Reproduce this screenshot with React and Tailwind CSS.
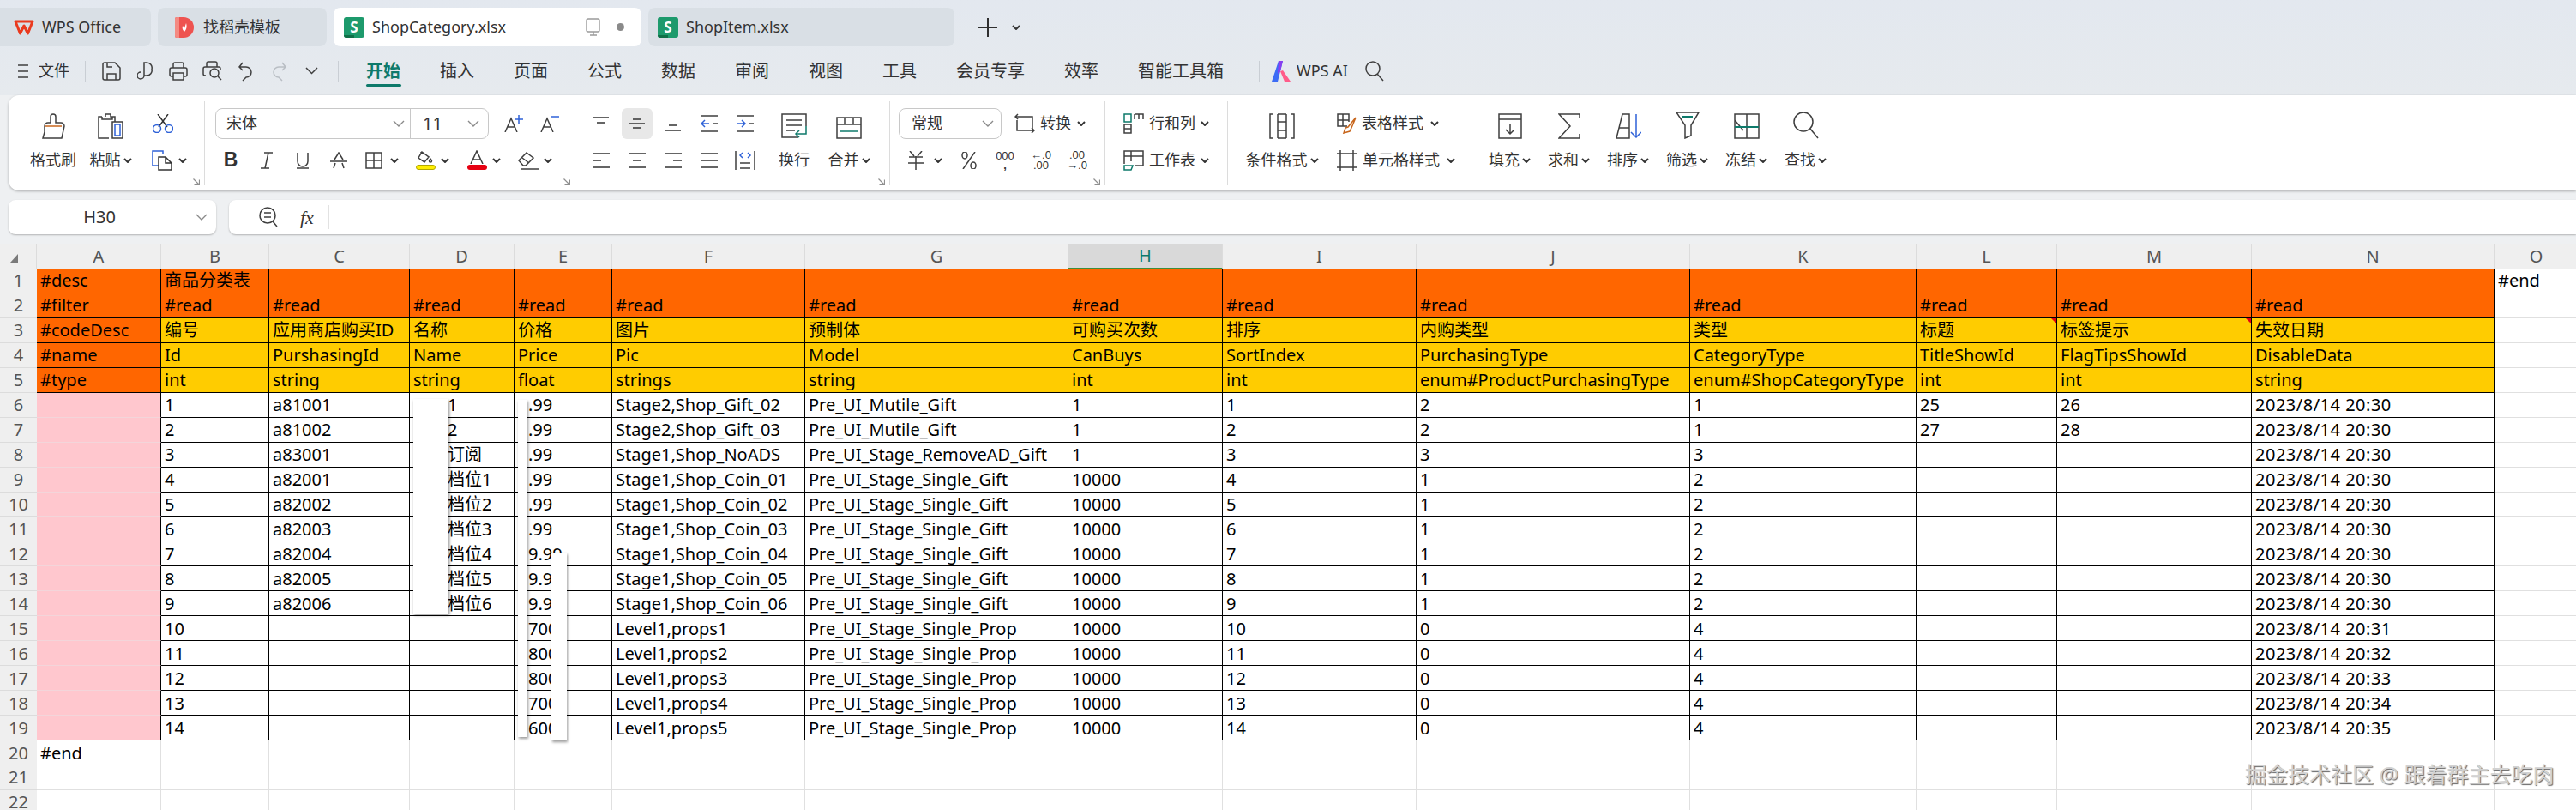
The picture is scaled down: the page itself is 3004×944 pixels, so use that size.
import { Fragment } from "react";

const FONT = "font-['Noto_Sans','Noto_Sans_CJK_SC',sans-serif]";

// 列宽和行数据
const columns = [
  ["A", 145], ["B", 126], ["C", 164], ["D", 122], ["E", 114], ["F", 225], ["G", 307],
  ["H", 180], ["I", 226], ["J", 319], ["K", 264], ["L", 164], ["M", 227], ["N", 283], ["O", 98],
];

const date = (m) => `2023/8/14 20:${m}`;
const gift = "Pre_UI_Stage_Single_Gift";
const prop = "Pre_UI_Stage_Single_Prop";

const headRows = [
  ["#desc", "商品分类表", "", "", "", "", "", "", "", "", "", "", "", ""],
  ["#filter", ...Array(13).fill("#read")],
  ["#codeDesc", "编号", "应用商店购买ID", "名称", "价格", "图片", "预制体", "可购买次数", "排序", "内购类型", "类型", "标题", "标签提示", "失效日期"],
  ["#name", "Id", "PurshasingId", "Name", "Price", "Pic", "Model", "CanBuys", "SortIndex", "PurchasingType", "CategoryType", "TitleShowId", "FlagTipsShowId", "DisableData"],
  ["#type", "int", "string", "string", "float", "strings", "string", "int", "int", "enum#ProductPurchasingType", "enum#ShopCategoryType", "int", "int", "string"],
];

const dataRows = [
  ["", "1", "a81001", "1", ".99", "Stage2,Shop_Gift_02", "Pre_UI_Mutile_Gift", "1", "1", "2", "1", "25", "26", date(30)],
  ["", "2", "a81002", "2", ".99", "Stage2,Shop_Gift_03", "Pre_UI_Mutile_Gift", "1", "2", "2", "1", "27", "28", date(30)],
  ["", "3", "a83001", "订阅", ".99", "Stage1,Shop_NoADS", "Pre_UI_Stage_RemoveAD_Gift", "1", "3", "3", "3", "", "", date(30)],
  ["", "4", "a82001", "档位1", ".99", "Stage1,Shop_Coin_01", gift, "10000", "4", "1", "2", "", "", date(30)],
  ["", "5", "a82002", "档位2", ".99", "Stage1,Shop_Coin_02", gift, "10000", "5", "1", "2", "", "", date(30)],
  ["", "6", "a82003", "档位3", ".99", "Stage1,Shop_Coin_03", gift, "10000", "6", "1", "2", "", "", date(30)],
  ["", "7", "a82004", "档位4", "9.99", "Stage1,Shop_Coin_04", gift, "10000", "7", "1", "2", "", "", date(30)],
  ["", "8", "a82005", "档位5", "9.99", "Stage1,Shop_Coin_05", gift, "10000", "8", "1", "2", "", "", date(30)],
  ["", "9", "a82006", "档位6", "9.99", "Stage1,Shop_Coin_06", gift, "10000", "9", "1", "2", "", "", date(30)],
  ["", "10", "", "", "700", "Level1,props1", prop, "10000", "10", "0", "4", "", "", date(31)],
  ["", "11", "", "", "800", "Level1,props2", prop, "10000", "11", "0", "4", "", "", date(32)],
  ["", "12", "", "", "800", "Level1,props3", prop, "10000", "12", "0", "4", "", "", date(33)],
  ["", "13", "", "", "700", "Level1,props4", prop, "10000", "13", "0", "4", "", "", date(34)],
  ["", "14", "", "", "600", "Level1,props5", prop, "10000", "14", "0", "4", "", "", date(35)],
];

const Svg = ({ w, h, children, sw = 1.5, stroke = "#3f3f3f" }) => (
  <svg width={w} height={h} viewBox={`0 0 ${w} ${h}`} fill="none" stroke={stroke} strokeWidth={sw} className="shrink-0">
    {children}
  </svg>
);

const Chev = () => (
  <svg width="10" height="6" viewBox="0 0 10 6" fill="none" stroke="#333" strokeWidth="2" className="shrink-0">
    <path d="M1 1l4 4 4-4" />
  </svg>
);

const ThinChev = () => (
  <svg width="14" height="8" viewBox="0 0 14 8" fill="none" stroke="#8a8a8a" strokeWidth="1.4" className="shrink-0">
    <path d="M1 1l6 6 6-6" />
  </svg>
);

const Launcher = () => (
  <svg width="8" height="8" viewBox="0 0 8 8" fill="none" stroke="#8f8f8f" strokeWidth="1.2" className="absolute right-[5px] bottom-[0px]">
    <path d="M0.5 0.5l7 7M7.5 1.5v6h-6" />
  </svg>
);

const SheetIcon = () => (
  <div className="relative flex h-6 w-6 shrink-0 items-center justify-center overflow-hidden rounded-[3px] bg-[#1d9a6c] text-[17px] font-bold leading-none text-white">
    S
    <div className="absolute bottom-0 left-0 h-[3px] w-3 bg-[#107048]" />
  </div>
);

// 大按钮：上面图标，下面文字
const Big = ({ icon, label, chev, w }) => (
  <div className="flex shrink-0 flex-col items-center" style={{ width: w }}>
    <div className="flex h-9 items-end">{icon}</div>
    <div className="mt-[7px] flex h-9 items-center gap-[3px] whitespace-nowrap">
      {label}
      {chev && <Chev />}
    </div>
  </div>
);

const Slot = ({ w, children, gap = "gap-[9px]" }) => (
  <div className={`flex h-9 shrink-0 items-center justify-center ${gap}`} style={{ width: w }}>
    {children}
  </div>
);

const Group = ({ w, children, launcher, border = true }) => (
  <div
    className={`relative flex h-[98px] shrink-0 flex-col pt-2 ${border ? "border-r border-[#dcdcdc]" : ""}`}
    style={{ width: w }}
  >
    {children}
    {launcher && <Launcher />}
  </div>
);

const AlignLines = ({ lines }) => (
  <Svg w={22} h={20} sw={1.6}>
    {lines.map(([x1, x2, y]) => (
      <path key={`${x1}-${y}`} d={`M${x1} ${y}H${x2}`} />
    ))}
  </Svg>
);

const Tabs = () => (
  <div className="flex h-[54px] items-end gap-[8px] text-[18px] text-[#333]">
    <div className="flex h-[45px] w-[176px] items-center rounded-r-lg bg-[#d9dfe5] pl-4">
      <svg width="24" height="18" viewBox="0 0 24 18" fill="none" strokeWidth="3" strokeLinejoin="round" className="shrink-0">
        <path d="M2 2h20l-5.500 14-4.500-9-4.500 9z" stroke="#ea3a1e" />
      </svg>
      <span className="ml-[9px]">WPS Office</span>
    </div>
    <div className="flex h-[45px] w-[197px] items-center rounded-lg bg-[#d9dfe5] pl-5">
      <svg width="22" height="24" viewBox="0 0 22 24" className="shrink-0">
        <path d="M0 2a2 2 0 012-2h8a12 12 0 010 24H2a2 2 0 01-2-2z" fill="#ee5350" />
        <path d="M0 2a2 2 0 012-2h3v24H2a2 2 0 01-2-2z" fill="#f48a82" />
        <path d="M11 17c-2-2-3-4-2-7l2 3 2-6c1 3 1 7-2 10z" fill="#fff" />
      </svg>
      <span className="ml-[11px]">找稻壳模板</span>
    </div>
    <div className="flex h-[45px] w-[359px] items-center rounded-lg bg-white pl-3 pr-5">
      <SheetIcon />
      <span className="ml-[9px]">ShopCategory.xlsx</span>
      <svg width="20" height="24" viewBox="0 0 20 24" fill="none" stroke="#9a9a9a" strokeWidth="1.4" className="ml-auto shrink-0">
        <rect x="2" y="2" width="15" height="15" rx="2" />
        <path d="M6 21h8M10 17v4" />
      </svg>
      <div className="ml-[17px] h-[9px] w-[9px] rounded-full bg-[#8a8a8a]" />
    </div>
    <div className="flex h-[45px] w-[357px] items-center rounded-lg bg-[#d9dfe5] pl-[11px]">
      <SheetIcon />
      <span className="ml-[9px]">ShopItem.xlsx</span>
    </div>
    <div className="ml-[20px] flex h-[45px] items-center gap-[17px]">
      <Svg w={22} h={22} sw={2} stroke="#2f2f2f">
        <path d="M11 0v22M0 11h22" />
      </Svg>
      <Chev />
    </div>
  </div>
);

const MenuBar = () => {
  const menus = ["插入", "页面", "公式", "数据", "审阅", "视图", "工具", "会员专享", "效率", "智能工具箱"];
  return (
    <div className="flex h-[57px] items-center text-[#333]">
      <Svg w={12} h={16} sw={1.5}>
        <path d="M0 1h12M0 8h12M0 15h12" />
      </Svg>
      <span className="ml-3 text-[18px]">文件</span>
      <div className="ml-[18px] h-6 w-px bg-[#c9ced4]" />
      <div className="ml-[19px]">
        <Svg w={22} h={22}>
          <path d="M3 1h12l6 6v12a2 2 0 01-2 2H3a2 2 0 01-2-2V3a2 2 0 012-2zM6 21v-7h10v7M6 2v4h6" />
        </Svg>
      </div>
      <div className="ml-[19px]">
        <Svg w={18} h={22}>
          <path d="M8 16H11a6 6 0 006-7.500A6 6 0 0011 1H8v15a4 4 0 11-4-4" />
        </Svg>
      </div>
      <div className="ml-[19px]">
        <Svg w={22} h={22}>
          <path d="M5 7V3a2 2 0 012-2h8a2 2 0 012 2v4M5 17H3a2 2 0 01-2-2V9a2 2 0 012-2h16a2 2 0 012 2v6a2 2 0 01-2 2h-2M5 13h12v8H5z" />
        </Svg>
      </div>
      <div className="ml-[17px]">
        <Svg w={23} h={23}>
          <path d="M5 7V3a2 2 0 012-2h8a2 2 0 012 2v4M4 17H3a2 2 0 01-2-2V9a2 2 0 012-2h16a2 2 0 012 2v1" />
          <circle cx="14" cy="14" r="5" />
          <path d="M18 18l4 4" />
        </Svg>
      </div>
      <div className="ml-[19px]">
        <Svg w={16} h={24}>
          <path d="M1 7h8a6 6 0 010 12l-4 4M5 2L1 7l4 4" />
        </Svg>
      </div>
      <div className="ml-[24px]">
        <Svg w={16} h={24} stroke="#b9bec4">
          <path d="M15 7H7a6 6 0 000 12l4 4M11 2l4 5-4 4" />
        </Svg>
      </div>
      <div className="ml-[22px]">
        <Svg w={15} h={9}>
          <path d="M1 1l6.500 6.500L14 1" />
        </Svg>
      </div>
      <div className="ml-[23px] h-6 w-px bg-[#c9ced4]" />
      <div className="relative ml-[32px] text-[20px] font-bold text-[#0e7a6b]">
        开始
        <div className="absolute -bottom-[3px] left-0 h-[3px] w-[41px] rounded-full bg-[#0e7a6b]" />
      </div>
      <div className="ml-[46px] flex gap-[46px] whitespace-nowrap text-[20px]">
        {menus.map((m) => (
          <span key={m}>{m}</span>
        ))}
      </div>
      <div className="ml-[41px] h-6 w-px bg-[#c9ced4]" />
      <svg width="22" height="24" viewBox="0 0 22 24" className="ml-[14px] shrink-0">
        <path d="M8 0h5L7 24H0z" fill="#3c6cf5" />
        <path d="M8 0h5l-3 12-3 3z" fill="#8a3ff0" />
        <path d="M10 12l3-1 9 13h-7z" fill="#ff5c8a" />
      </svg>
      <span className="ml-[7px] text-[18px]">WPS AI</span>
      <div className="ml-[20px]">
        <Svg w={23} h={24}>
          <circle cx="9" cy="9" r="8" />
          <path d="M14 15l7 8" />
        </Svg>
      </div>
    </div>
  );
};

const Ribbon = () => (
  <div className="ml-[10px] flex h-[111px] items-center rounded-l-xl bg-white pl-0 text-[18px] text-[#333] shadow-[0_1px_3px_rgba(0,0,0,0.28)]">
    <Group w={229} launcher>
      <div className="flex pl-[16px]">
        <Big
          w={72}
          label="格式刷"
          icon={
            <Svg w={28} h={30}>
              <path d="M11 11V4a3 3 0 016 0v7h6a4 4 0 014 4l-3 14H2l2-7V15a4 4 0 014-4z" />
              <path d="M5 15h19" stroke="#c8661c" />
            </Svg>
          }
        />
        <Big
          w={62}
          label="粘贴"
          chev
          icon={
            <Svg w={30} h={30}>
              <path d="M5 4H1v25h12M9 4V1h6v3h5v6M5 4v3h12V4" />
              <path d="M17 10h12v19H17z" />
              <path d="M20 13h6v13h-6z" stroke="#2f62d8" />
            </Svg>
          }
        />
        <div className="flex flex-col">
          <div className="flex h-9 w-[65px] items-center justify-center pr-[5px]">
            <Svg w={24} h={22} stroke="#333">
              <path d="M6 0l11 15M18 0L7 15" />
              <circle cx="5" cy="17" r="4.500" stroke="#2f62d8" />
              <circle cx="19" cy="17" r="4.500" stroke="#2f62d8" />
            </Svg>
          </div>
          <div className="mt-[7px] flex h-9 items-center gap-[7px] pl-[17px]">
            <svg width="24" height="24" viewBox="0 0 24 24" fill="none" strokeWidth="1.5" className="shrink-0">
              <path d="M8 18H1V1h12v4" stroke="#2f62d8" />
              <path d="M8 8h8l7 7v8H8zM16 8v7h7" stroke="#333" />
            </svg>
            <Chev />
          </div>
        </div>
      </div>
    </Group>

    <Group w={432} launcher>
      <div className="flex items-center pl-[12px]">
        <div className="flex h-9 w-[319px] rounded-lg border border-[#c8c8c8]">
          <div className="flex w-[227px] items-center justify-between border-r border-[#c8c8c8] pl-3 pr-[6px]">
            <span>宋体</span>
            <ThinChev />
          </div>
          <div className="flex flex-1 items-center justify-between pl-[14px] pr-[10px]">
            <span className="text-[20px]">11</span>
            <ThinChev />
          </div>
        </div>
        <div className="ml-[18px] flex items-center gap-[20px]">
          <Svg w={22} h={20}>
            <path d="M1 20L8 4l7 16M3.500 14h9" />
            <path d="M17 0v10M12 5h10" stroke="#2f62d8" />
          </Svg>
          <Svg w={22} h={20}>
            <path d="M1 20L8 4l7 16M3.500 14h9" />
            <path d="M12 2h10" stroke="#2f62d8" />
          </Svg>
        </div>
      </div>
      <div className="mt-[7px] flex items-center pl-[9px]">
        <Slot w={42}>
          <span className="font-['Liberation_Sans',sans-serif] text-[23px] font-bold leading-none">B</span>
        </Slot>
        <Slot w={42}>
          <Svg w={16} h={20}>
            <path d="M5 1h10M1 19h10M10 1L6 19" />
          </Svg>
        </Slot>
        <Slot w={42}>
          <Svg w={14} h={20}>
            <path d="M1 1v10a6 6 0 0012 0V1M0 19h14" />
          </Svg>
        </Slot>
        <Slot w={42}>
          <Svg w={20} h={20}>
            <path d="M5 9l5-8 5 8M0 11h20M4 19l2-6M16 19l-2-6" />
          </Svg>
        </Slot>
        <Slot w={58}>
          <Svg w={20} h={20}>
            <path d="M1 1h18v18H1zM10 1v18M1 10h18" />
          </Svg>
          <Chev />
        </Slot>
        <Slot w={60} gap="gap-[6px]">
          <div className="flex flex-col items-center">
            <Svg w={20} h={15}>
              <path d="M6 1l8 6-5 6-7-5zM5 3V1M16 9c2 2 2 4 0 4s-2-2 0-4z" />
            </Svg>
            <div className="mt-[1px] h-[6px] w-[23px] rounded-sm border border-[#b4a800] bg-[#ffee00]" />
          </div>
          <Chev />
        </Slot>
        <Slot w={60} gap="gap-[6px]">
          <div className="flex flex-col items-center">
            <Svg w={18} h={16}>
              <path d="M2 16L9 1l7 15M5 11h8" />
            </Svg>
            <div className="mt-[1px] h-[6px] w-[23px] rounded-sm bg-[#e60012]" />
          </div>
          <Chev />
        </Slot>
        <Slot w={60} gap="gap-[6px]">
          <Svg w={24} h={22}>
            <path d="M1 11l9-9 8 6-9 9H6zM5 8l8 6M4 21h20" />
          </Svg>
          <Chev />
        </Slot>
      </div>
    </Group>

    <Group w={367} launcher>
      <div className="flex pl-[9px]">
        <div className="w-[210px] shrink-0">
          <div className="flex">
            <Slot w={42}>
              <AlignLines lines={[[2, 20, 3], [6, 16, 9]]} />
            </Slot>
            <Slot w={42}>
              <div className="flex h-9 w-9 items-center justify-center rounded-md bg-[#e8e8e8]">
                <AlignLines lines={[[6, 16, 5], [2, 20, 10], [6, 16, 15]]} />
              </div>
            </Slot>
            <Slot w={42}>
              <AlignLines lines={[[6, 16, 12], [2, 20, 18]]} />
            </Slot>
            <Slot w={42}>
              <svg width="20" height="20" viewBox="0 0 20 20" fill="none" strokeWidth="1.5" className="shrink-0">
                <path d="M0 1h20M0 19h20M14 10h6" stroke="#3f3f3f" />
                <path d="M10 10H1M5 6l-4 4 4 4" stroke="#2f62d8" />
              </svg>
            </Slot>
            <Slot w={42}>
              <svg width="20" height="20" viewBox="0 0 20 20" fill="none" strokeWidth="1.5" className="shrink-0">
                <path d="M0 1h20M0 19h20M14 10h6" stroke="#3f3f3f" />
                <path d="M1 10h9M6 6l4 4-4 4" stroke="#2f62d8" />
              </svg>
            </Slot>
          </div>
          <div className="mt-[7px] flex">
            <Slot w={42}>
              <AlignLines lines={[[1, 21, 2], [1, 11, 10], [1, 21, 18]]} />
            </Slot>
            <Slot w={42}>
              <AlignLines lines={[[1, 21, 2], [6, 16, 10], [1, 21, 18]]} />
            </Slot>
            <Slot w={42}>
              <AlignLines lines={[[1, 21, 2], [11, 21, 10], [1, 21, 18]]} />
            </Slot>
            <Slot w={42}>
              <AlignLines lines={[[1, 21, 2], [1, 21, 10], [1, 21, 18]]} />
            </Slot>
            <Slot w={42}>
              <svg width="24" height="22" viewBox="0 0 24 22" fill="none" strokeWidth="1.5" className="shrink-0">
                <path d="M1 0v22M23 0v22M6 14h12M6 20h12" stroke="#3f3f3f" />
                <path d="M9 2L6 5l3 3M15 2l3 3-3 3" stroke="#2f62d8" />
              </svg>
            </Slot>
          </div>
        </div>
        <Big
          w={72}
          label="换行"
          icon={
            <svg width="30" height="30" viewBox="0 0 30 30" fill="none" strokeWidth="1.5" className="shrink-0">
              <path d="M20 28H1V1h28v14M6 8h18M6 14h18M6 20h10" stroke="#3f3f3f" />
              <path d="M29 15v9h-11M21 20l-4 4 4 4" stroke="#0e7a6b" />
            </svg>
          }
        />
        <Big
          w={56}
          label="合并"
          chev
          icon={
            <svg width="30" height="26" viewBox="0 0 30 26" fill="none" strokeWidth="1.5" className="shrink-0">
              <path d="M1 1h28v24H1zM1 9h28M10 1v8M20 1v8" stroke="#3f3f3f" />
              <path d="M5 17h20" stroke="#0e7a6b" />
            </svg>
          }
        />
      </div>
    </Group>

    <Group w={251} launcher>
      <div className="flex items-center pl-[10px]">
        <div className="flex h-9 w-[120px] items-center justify-between rounded-lg border border-[#c8c8c8] pl-[14px] pr-[8px]">
          <span>常规</span>
          <ThinChev />
        </div>
        <div className="ml-[15px]">
          <Svg w={24} h={24}>
            <path d="M4 1L1 4l3 3M1 4h20v15M20 23l3-3-3-3M23 20H3V8" />
          </Svg>
        </div>
        <span className="ml-[6px]">转换</span>
        <div className="ml-[7px]">
          <Chev />
        </div>
      </div>
      <div className="mt-[7px] flex items-center pl-[11px]">
        <Slot w={60} gap="gap-[12px]">
          <Svg w={18} h={22}>
            <path d="M2 0l5 6M16 0l-5 6M1 7h16M0 14h18M9 6v16" />
          </Svg>
          <Chev />
        </Slot>
        <Slot w={42}>
          <Svg w={18} h={20}>
            <path d="M16 0L2 20" />
            <ellipse cx="4" cy="4" rx="3" ry="4" />
            <ellipse cx="14" cy="16" rx="3" ry="4" />
          </Svg>
        </Slot>
        <Slot w={42}>
          <div className="flex flex-col items-center font-['Liberation_Sans',sans-serif] text-[13px] leading-[13px]">
            <span>000</span>
            <span className="font-bold leading-[10px]">,</span>
          </div>
        </Slot>
        <Slot w={42}>
          <div className="flex flex-col items-center font-['Liberation_Sans',sans-serif] text-[13px] leading-[12px]">
            <span>←.0</span>
            <span>.00</span>
          </div>
        </Slot>
        <Slot w={42}>
          <div className="flex flex-col items-center font-['Liberation_Sans',sans-serif] text-[13px] leading-[12px]">
            <span>.00</span>
            <span>→.0</span>
          </div>
        </Slot>
      </div>
    </Group>

    <Group w={143}>
      <div className="flex h-9 items-center pl-[21px]">
        <svg width="24" height="24" viewBox="0 0 24 24" fill="none" strokeWidth="1.5" className="shrink-0">
          <path d="M1 1h8v9H1z" stroke="#0e7a6b" />
          <path d="M13 1h10v6M18 1v6M13 7V1M1 13h8v10H1zM1 18h8" stroke="#3f3f3f" />
        </svg>
        <span className="ml-[6px]">行和列</span>
        <div className="ml-[6px]">
          <Chev />
        </div>
      </div>
      <div className="mt-[7px] flex h-9 items-center pl-[21px]">
        <svg width="24" height="24" viewBox="0 0 24 24" fill="none" strokeWidth="1.5" className="shrink-0">
          <path d="M1 16V1h22v17h-9M1 7h22M9 1v12" stroke="#3f3f3f" />
          <path d="M1 18h10l-2 5H1z" stroke="#0e7a6b" />
        </svg>
        <span className="ml-[6px]">工作表</span>
        <div className="ml-[6px]">
          <Chev />
        </div>
      </div>
    </Group>

    <Group w={285}>
      <div className="flex pl-[14px]">
        <Big
          w={98}
          label="条件格式"
          chev
          icon={
            <Svg w={30} h={30}>
              <path d="M4 1H1v28h3M26 1h3v28h-3M10 1h10M10 29h10M10 1v28M10 10h10v10H10M20 10V1M20 20v9" />
            </Svg>
          }
        />
        <div className="ml-[15px]">
          <div className="flex h-9 items-center">
            <svg width="23" height="24" viewBox="0 0 23 24" fill="none" strokeWidth="1.5" className="shrink-0">
              <path d="M12 15H1V1h13v9M1 8h13M7 1v14" stroke="#3f3f3f" />
              <path d="M22 5l-9 11-3 1-2 6 7-2 2-4 5-12z" stroke="#c8661c" />
            </svg>
            <span className="ml-[6px]">表格样式</span>
            <div className="ml-[8px]">
              <Chev />
            </div>
          </div>
          <div className="mt-[7px] flex h-9 items-center">
            <Svg w={23} h={24}>
              <path d="M4 0v24M19 0v24M0 4h23M0 20h23" />
            </Svg>
            <span className="ml-[7px]">单元格样式</span>
            <div className="ml-[8px]">
              <Chev />
            </div>
          </div>
        </div>
      </div>
    </Group>

    <Group w={420} border={false}>
      <div className="flex pl-[9px]">
        <Big
          w={69}
          label="填充"
          chev
          icon={
            <Svg w={28} h={30}>
              <path d="M1 1h26v6H1zM1 7v22h26V7M14 12v11M9 19l5 5 5-5" />
            </Svg>
          }
        />
        <Big
          w={69}
          label="求和"
          chev
          icon={
            <Svg w={26} h={30}>
              <path d="M25 6V1H1l13 14L1 29h24v-5" />
            </Svg>
          }
        />
        <Big
          w={69}
          label="排序"
          chev
          icon={
            <svg width="30" height="30" viewBox="0 0 30 30" fill="none" strokeWidth="1.5" className="shrink-0">
              <path d="M8 1h8v28H1zM4 17h12" stroke="#3f3f3f" />
              <path d="M24 1v27M18 22l6 6 6-6" stroke="#2f62d8" />
            </svg>
          }
        />
        <Big
          w={69}
          label="筛选"
          chev
          icon={
            <svg width="28" height="32" viewBox="0 0 28 32" fill="none" strokeWidth="1.5" className="shrink-0">
              <path d="M1 1h26l-9 15v12l-7 3V16z" stroke="#3f3f3f" />
              <path d="M8 6h12" stroke="#0e7a6b" strokeWidth="2" />
            </svg>
          }
        />
        <Big
          w={69}
          label="冻结"
          chev
          icon={
            <svg width="30" height="30" viewBox="0 0 30 30" fill="none" strokeWidth="1.5" className="shrink-0">
              <path d="M1 1h28v28H1zM1 8l10 12M15 1v28" stroke="#3f3f3f" />
              <path d="M1 16h28" stroke="#0e7a6b" strokeWidth="2" />
            </svg>
          }
        />
        <Big
          w={69}
          label="查找"
          chev
          icon={
            <Svg w={30} h={32}>
              <circle cx="12" cy="12" r="11" />
              <path d="M20 20l9 11" />
            </Svg>
          }
        />
      </div>
    </Group>
  </div>
);

const FormulaBar = () => (
  <div className="mt-[11px] flex h-10 gap-[15px] pl-[10px] text-[#333]">
    <div className="relative flex w-[242px] shrink-0 items-center justify-center rounded-lg bg-white pr-[30px] text-[20px] shadow-[0_1px_2px_rgba(0,0,0,0.25)]">
      H30
      <div className="absolute right-[10px]">
        <ThinChev />
      </div>
    </div>
    <div className="flex flex-1 items-center rounded-l-lg bg-white pl-[35px] shadow-[0_1px_2px_rgba(0,0,0,0.25)]">
      <Svg w={22} h={24}>
        <circle cx="10" cy="10" r="9" />
        <path d="M6 7h8M6 12h8M16 17l5 6" />
      </Svg>
      <span className="ml-[26px] font-['Liberation_Serif',serif] text-[22px] italic">fx</span>
      <div className="ml-[17px] h-7 w-px bg-[#e2e2e2]" />
    </div>
  </div>
);

// 单元格底色和线条
const cellClass = (row, col) => {
  if (col === 14 || row > 19) return "border-r border-b border-[#e0e0e0] bg-white";
  if (row <= 5) {
    const orange = row <= 2 || col === 0;
    return `border-r border-b border-black ${orange ? "bg-[#ff6600]" : "bg-[#ffcc00]"}`;
  }
  if (col === 0) return "border-r border-b border-r-black border-b-[#f3d5da] bg-[#ffc7ce]";
  return "border-r border-b border-black bg-white";
};

const Sheet = () => {
  const rows = [...headRows, ...dataRows];
  return (
    <div className="relative mt-[11px] flex-1 overflow-hidden bg-white text-[20px] leading-none text-black">
      <div className="grid grid-cols-[43px_145px_126px_164px_122px_114px_225px_307px_180px_226px_319px_264px_164px_227px_283px_98px] auto-rows-[28.96px]">
        <div className="flex h-[30px] items-center justify-end border-r border-b border-[#dcdcdc] bg-[#efefef] pr-[21px]">
          <div className="mt-1 h-0 w-0 border-b-[10px] border-l-[9px] border-b-[#7a7a7a] border-l-transparent" />
        </div>
        {columns.map(([name]) => (
          <div
            key={name}
            className={`flex h-[30px] items-center justify-center border-r border-[#dcdcdc] ${
              name === "H"
                ? "border-b-2 border-b-[#3d8f3d] bg-[#d9d9d9] text-[#0e7a6b]"
                : "border-b border-b-[#e0e0e0] bg-[#efefef] text-[#555]"
            }`}
          >
            {name}
          </div>
        ))}
        {Array.from({ length: 22 }, (_, i) => {
          const rowNo = i + 1;
          const cells = rows[i] || [];
          return (
            <Fragment key={rowNo}>
              <div className="flex items-center justify-center border-b border-[#dcdcdc] bg-[#efefef] pt-[1px] text-[#555]">
                {rowNo}
              </div>
              {columns.map(([name], c) => {
                let text = cells[c] || "";
                if (rowNo === 1 && c === 14) text = "#end";
                if (rowNo === 20 && c === 0) text = "#end";
                const isHidden = rowNo > 5 && (c === 3 || c === 4);
                const isNote = rowNo === 3 && (c === 11 || c === 12);
                const isDate = rowNo > 5 && rowNo < 20 && c === 13;
                return (
                  <div
                    key={name}
                    className={`relative flex items-center overflow-hidden whitespace-nowrap pt-[1px] ${
                      isHidden ? (c === 3 ? "pl-[44px]" : "pl-[16px]") : "pl-1"
                    } ${isDate ? "tracking-[0.5px]" : ""} ${cellClass(rowNo, c)}`}
                  >
                    {text}
                    {isNote && (
                      <div className="absolute top-0 right-0 h-0 w-0 border-t-[6px] border-l-[6px] border-t-[#e60012] border-l-transparent" />
                    )}
                  </div>
                );
              })}
            </Fragment>
          );
        })}
      </div>

      {/* 截图上盖住的白色涂抹块 */}
      <div className="absolute left-[482px] top-[181px] h-[250px] w-[41px] bg-white shadow-[1px_2px_3px_rgba(0,0,0,0.45)]" />
      <div className="absolute left-[604px] top-[182px] h-[393px] w-[11px] bg-white shadow-[1px_2px_3px_rgba(0,0,0,0.4)]" />
      <div className="absolute left-[643px] top-[360px] h-[219px] w-[18px] bg-white shadow-[1px_2px_3px_rgba(0,0,0,0.4)]" />

      <div className="absolute left-[2618px] top-[606px] whitespace-nowrap text-[25px] leading-none text-[#d2d2d2] [text-shadow:1px_1px_1px_#666]">
        掘金技术社区 @ 跟着群主去吃肉
      </div>
    </div>
  );
};

export default function App() {
  return (
    <div className={`flex h-[944px] w-[3004px] flex-col overflow-hidden bg-[#eef0f2] ${FONT}`}>
      <div className="bg-gradient-to-b from-[#e3e8ef] to-[#e6eaee]">
        <Tabs />
        <div className="pl-[21px]">
          <MenuBar />
        </div>
      </div>
      <Ribbon />
      <FormulaBar />
      <Sheet />
    </div>
  );
}
